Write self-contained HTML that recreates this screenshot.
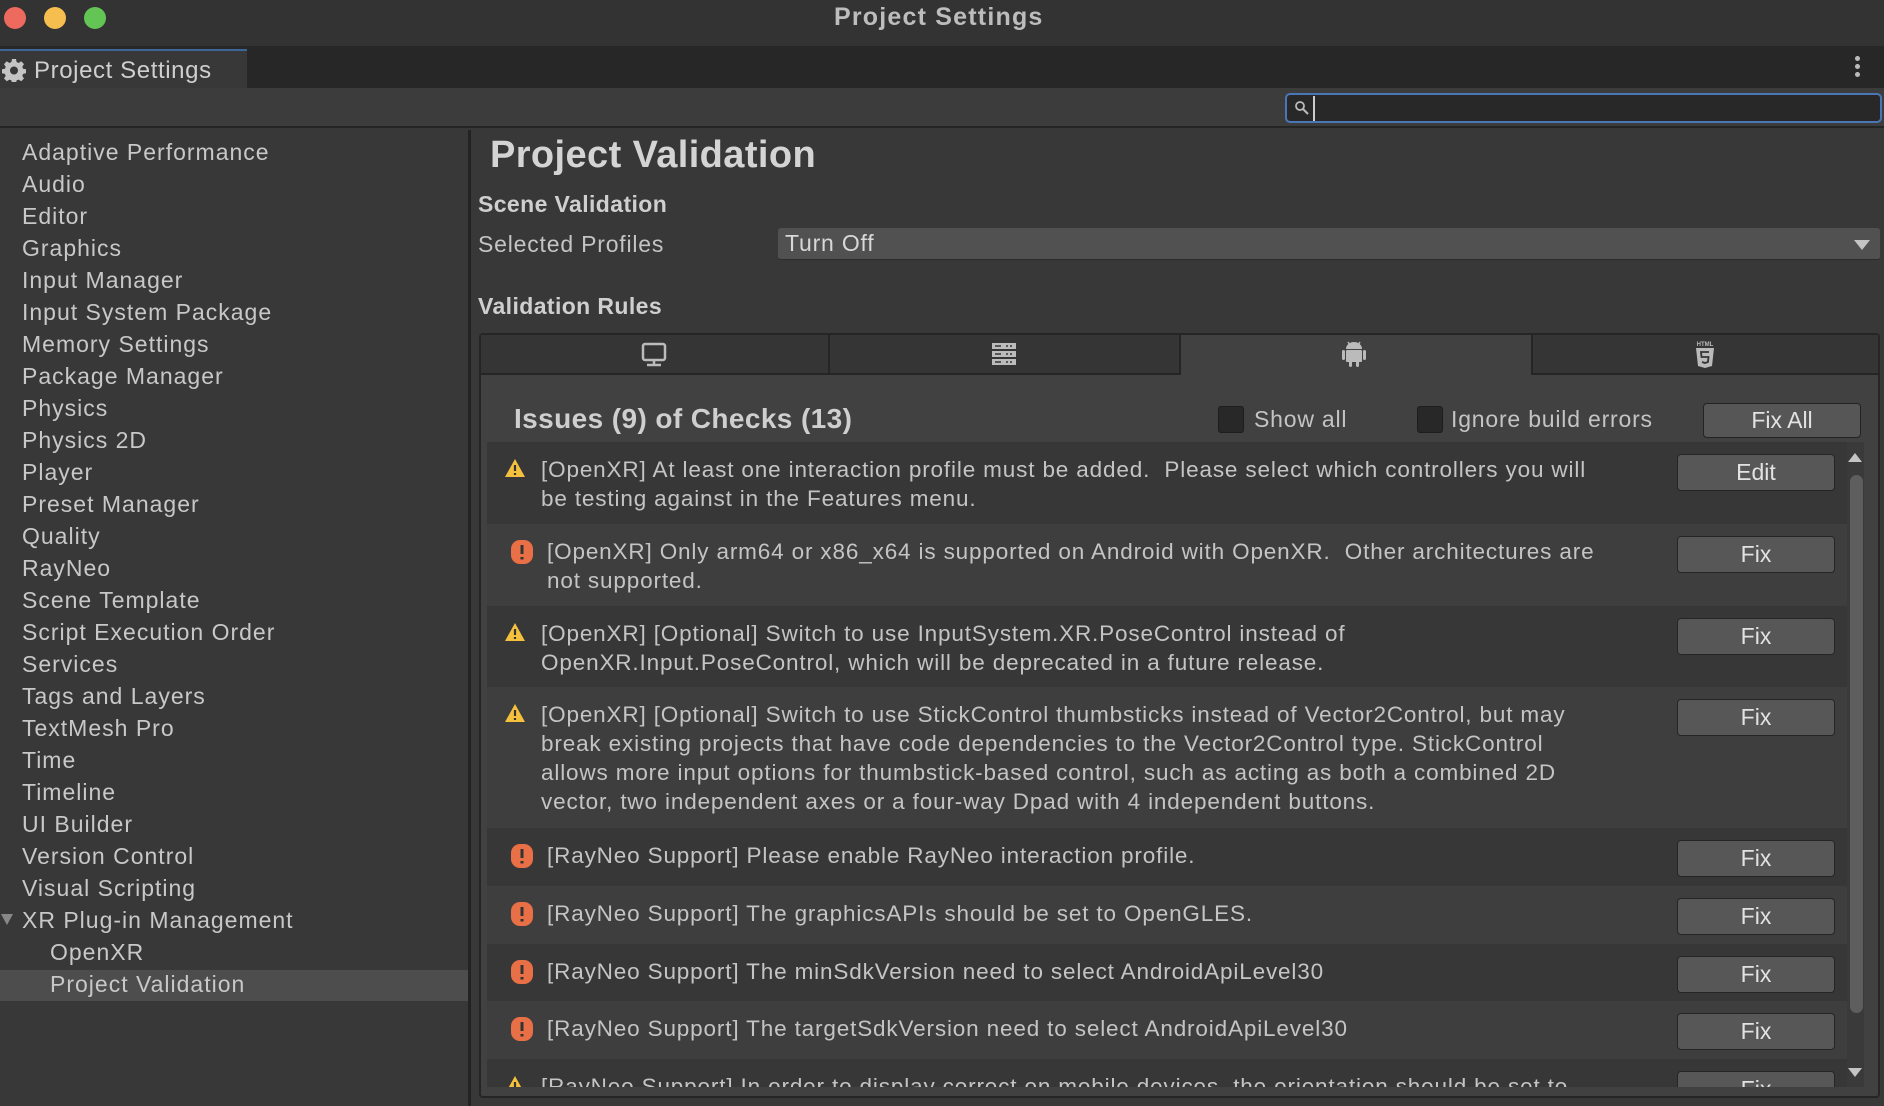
<!DOCTYPE html>
<html><head><meta charset="utf-8"><style>
*{margin:0;padding:0;box-sizing:border-box}
body{width:1884px;height:1106px;background:#383838;font-family:"Liberation Sans",sans-serif;color:#c8c8c8;position:relative;overflow:hidden}
.a{position:absolute}
.nav div{position:absolute;left:22px;font-size:23px;letter-spacing:1px;color:#c8c8c8;height:32px;line-height:32px;white-space:nowrap}
.row{position:absolute;left:487px;width:1360px}
.row .t{position:absolute;font-size:22.5px;letter-spacing:0.85px;line-height:29px;color:#c4c4c4;white-space:nowrap;top:13px}
.btn{position:absolute;left:1190px;top:12px;width:158px;height:37px;background:#575757;border:1px solid #252525;border-radius:4px;font-size:23px;color:#e2e2e2;text-align:center;line-height:35px}
.w{position:absolute;left:17px;top:16px}
.e{position:absolute;left:23px;top:15px}
</style></head><body>
<!-- title bar -->
<div class="a" style="left:0;top:0;width:1884px;height:46px;background:#333"></div>
<div class="a" style="left:4px;top:7px;width:22px;height:22px;border-radius:50%;background:#ee6a5f"></div>
<div class="a" style="left:44px;top:7px;width:22px;height:22px;border-radius:50%;background:#f5be4f"></div>
<div class="a" style="left:84px;top:7px;width:22px;height:22px;border-radius:50%;background:#62c554"></div>
<div class="a" style="left:834px;top:3px;font-size:25px;font-weight:bold;letter-spacing:1.2px;color:#bdbdbd">Project Settings</div>
<!-- tab bar -->
<div class="a" style="left:0;top:46px;width:1884px;height:42px;background:#272727"></div>
<div class="a" style="left:0;top:49px;width:247px;height:39px;background:#383838;border-top:2px solid #3d6699"></div>
<svg class="a" style="left:2px;top:58px" width="24" height="24" viewBox="0 0 24 24"><path fill="#c4c4c4" d="M10 1h4l.6 3 2 1 2.6-1.7 2.8 2.8L20.3 8.7l.8 2 2.9.6v4l-2.9.6-.8 2 1.7 2.6-2.8 2.8-2.6-1.7-2 .8-.6 2.9h-4l-.6-2.9-2-.8-2.6 1.7-2.8-2.8 1.7-2.6-.8-2L0 15.3v-4l2.9-.6.8-2L2 6.1 4.8 3.3l2.6 1.7 2-1zM12 8.5a4 4 0 100 8 4 4 0 000-8z"/></svg>
<div class="a" style="left:34px;top:57px;font-size:24px;letter-spacing:0.6px;color:#cfcfcf">Project Settings</div>
<div class="a" style="left:1855px;top:56px;width:5px;height:5px;border-radius:50%;background:#bbb;box-shadow:0 8px 0 #bbb,0 16px 0 #bbb"></div>
<!-- toolbar -->
<div class="a" style="left:0;top:88px;width:1884px;height:40px;background:#3c3c3c;border-bottom:2px solid #242424"></div>
<div class="a" style="left:1285px;top:93px;width:597px;height:30px;background:#282828;border:2px solid #4a76b8;border-radius:5px"></div>
<svg class="a" style="left:1294px;top:100px" width="16" height="16" viewBox="0 0 16 16"><circle cx="6" cy="6" r="4" fill="none" stroke="#bbb" stroke-width="1.8"/><path d="M9 9l5 5" stroke="#bbb" stroke-width="2"/></svg>
<div class="a" style="left:1313px;top:96px;width:2px;height:25px;background:#ccc"></div>
<!-- left nav -->
<div class="a" style="left:468px;top:130px;width:3px;height:976px;background:#232323"></div>
<div class="a" style="left:0;top:970px;width:468px;height:31px;background:#4d4d4d"></div>
<div class="nav">
<div style="top:136px">Adaptive Performance</div>
<div style="top:168px">Audio</div>
<div style="top:200px">Editor</div>
<div style="top:232px">Graphics</div>
<div style="top:264px">Input Manager</div>
<div style="top:296px">Input System Package</div>
<div style="top:328px">Memory Settings</div>
<div style="top:360px">Package Manager</div>
<div style="top:392px">Physics</div>
<div style="top:424px">Physics 2D</div>
<div style="top:456px">Player</div>
<div style="top:488px">Preset Manager</div>
<div style="top:520px">Quality</div>
<div style="top:552px">RayNeo</div>
<div style="top:584px">Scene Template</div>
<div style="top:616px">Script Execution Order</div>
<div style="top:648px">Services</div>
<div style="top:680px">Tags and Layers</div>
<div style="top:712px">TextMesh Pro</div>
<div style="top:744px">Time</div>
<div style="top:776px">Timeline</div>
<div style="top:808px">UI Builder</div>
<div style="top:840px">Version Control</div>
<div style="top:872px">Visual Scripting</div>
<div style="top:904px">XR Plug-in Management</div>
<div style="top:936px;left:50px">OpenXR</div>
<div style="top:968px;left:50px">Project Validation</div>
</div>
<div class="a" style="left:1px;top:914px;width:0;height:0;border-left:6px solid transparent;border-right:6px solid transparent;border-top:11px solid #888"></div>
<!-- right -->
<div class="a" style="left:490px;top:134px;font-size:38px;font-weight:bold;letter-spacing:0.4px;color:#d4d4d4">Project Validation</div>
<div class="a" style="left:478px;top:191px;font-size:23px;font-weight:bold;letter-spacing:0.4px;color:#cfcfcf">Scene Validation</div>
<div class="a" style="left:478px;top:231px;font-size:23px;letter-spacing:0.8px;color:#c4c4c4">Selected Profiles</div>
<div class="a" style="left:778px;top:228px;width:1102px;height:32px;background:#515151;border-radius:3px;border-bottom:1px solid #2c2c2c"></div>
<div class="a" style="left:785px;top:230px;font-size:23px;letter-spacing:0.8px;color:#d8d8d8">Turn Off</div>
<div class="a" style="left:1854px;top:240px;width:0;height:0;border-left:8px solid transparent;border-right:8px solid transparent;border-top:10px solid #c4c4c4"></div>
<div class="a" style="left:478px;top:293px;font-size:23px;font-weight:bold;letter-spacing:0.4px;color:#cfcfcf">Validation Rules</div>
<!-- tab box -->
<div class="a" style="left:479px;top:333px;width:1401px;height:765px;background:#414141;border:2px solid #252525;border-radius:4px"></div>
<div class="a" style="left:481px;top:335px;width:349px;height:40px;background:#353535;border-bottom:2px solid #252525;border-right:2px solid #252525"></div>
<div class="a" style="left:830px;top:335px;width:351px;height:40px;background:#353535;border-bottom:2px solid #252525;border-right:2px solid #252525"></div>
<div class="a" style="left:1531px;top:335px;width:347px;height:40px;background:#353535;border-bottom:2px solid #252525;border-left:2px solid #252525"></div>
<svg class="a" style="left:641px;top:342px" width="26" height="26" viewBox="0 0 26 26"><rect x="2" y="2" width="22" height="16" rx="2" fill="none" stroke="#bbb" stroke-width="2.5"/><path d="M13 18v4M6 23h14" stroke="#bbb" stroke-width="2.5"/></svg>
<svg class="a" style="left:991px;top:341px" width="26" height="26" viewBox="0 0 26 26"><rect x="1" y="2" width="24" height="6" fill="#bbb"/><rect x="1" y="10" width="24" height="6" fill="#bbb"/><rect x="1" y="18" width="24" height="6" fill="#bbb"/><path d="M4 5h6M4 13h6M4 21h6M15 5h2M19 5h2M15 13h2M19 13h2M15 21h2M19 21h2" stroke="#353535" stroke-width="1.5"/></svg>
<svg class="a" style="left:1341px;top:340px" width="26" height="30" viewBox="0 0 26 30"><path d="M5 9a8 7 0 0116 0z" fill="#bbb"/><path d="M7 2l2 3M19 2l-2 3" stroke="#bbb" stroke-width="1.5"/><rect x="5" y="10" width="16" height="12" rx="1" fill="#bbb"/><rect x="1" y="10" width="3" height="10" rx="1.5" fill="#bbb"/><rect x="22" y="10" width="3" height="10" rx="1.5" fill="#bbb"/><rect x="8" y="20" width="3" height="7" rx="1.5" fill="#bbb"/><rect x="15" y="20" width="3" height="7" rx="1.5" fill="#bbb"/></svg>
<svg class="a" style="left:1694px;top:340px" width="22" height="30" viewBox="0 0 22 30"><text x="11" y="6" font-size="6" font-family="Liberation Sans" font-weight="bold" fill="#bbb" text-anchor="middle">HTML</text><path d="M2 8h18l-2 18-7 2-7-2z" fill="#bbb"/><path d="M15 12H7l.5 5h7l-.5 5-3 1-3-1" fill="none" stroke="#353535" stroke-width="1.8"/></svg>
<div class="a" style="left:514px;top:403px;font-size:28px;font-weight:bold;letter-spacing:0.4px;color:#cfcfcf">Issues (9) of Checks (13)</div>
<div class="a" style="left:1218px;top:406px;width:26px;height:27px;background:#282828;border:1px solid #1d1d1d;border-radius:3px"></div>
<div class="a" style="left:1254px;top:406px;font-size:23px;letter-spacing:0.8px;color:#c4c4c4">Show all</div>
<div class="a" style="left:1417px;top:406px;width:26px;height:27px;background:#282828;border:1px solid #1d1d1d;border-radius:3px"></div>
<div class="a" style="left:1451px;top:406px;font-size:23px;letter-spacing:0.8px;color:#c4c4c4">Ignore build errors</div>
<div class="a" style="left:1703px;top:403px;width:158px;height:35px;background:#565656;border:1px solid #232323;border-radius:4px;text-align:center;line-height:33px;font-size:23px;color:#e2e2e2">Fix All</div>
<!-- list -->
<div class="a" style="left:487px;top:442px;width:1360px;height:645px;overflow:hidden">
<div class="row" style="left:0;top:0;height:82px;background:#373737"><svg class="w" width="22" height="20" viewBox="0 0 22 20"><path d="M11 1L21 19H1z" fill="#f4c03e"/><path d="M11 7v6M11 15v2" stroke="#333" stroke-width="2.2"/></svg><div class="t" style="left:54px">[OpenXR] At least one interaction profile must be added.&nbsp; Please select which controllers you will<br>be testing against in the Features menu.</div><div class="btn">Edit</div></div>
<div class="row" style="left:0;top:82px;height:82px;background:#3e3e3e"><svg class="e" width="24" height="26" viewBox="0 0 24 26"><rect x="1" y="1" width="22" height="24" rx="9" fill="#e96f47"/><path d="M12 6v9M12 18v2.5" stroke="#333" stroke-width="3"/></svg><div class="t" style="left:60px">[OpenXR] Only arm64 or x86_x64 is supported on Android with OpenXR.&nbsp; Other architectures are<br>not supported.</div><div class="btn">Fix</div></div>
<div class="row" style="left:0;top:164px;height:81px;background:#373737"><svg class="w" width="22" height="20" viewBox="0 0 22 20"><path d="M11 1L21 19H1z" fill="#f4c03e"/><path d="M11 7v6M11 15v2" stroke="#333" stroke-width="2.2"/></svg><div class="t" style="left:54px">[OpenXR] [Optional] Switch to use InputSystem.XR.PoseControl instead of<br>OpenXR.Input.PoseControl, which will be deprecated in a future release.</div><div class="btn">Fix</div></div>
<div class="row" style="left:0;top:245px;height:141px;background:#3e3e3e"><svg class="w" width="22" height="20" viewBox="0 0 22 20"><path d="M11 1L21 19H1z" fill="#f4c03e"/><path d="M11 7v6M11 15v2" stroke="#333" stroke-width="2.2"/></svg><div class="t" style="left:54px">[OpenXR] [Optional] Switch to use StickControl thumbsticks instead of Vector2Control, but may<br>break existing projects that have code dependencies to the Vector2Control type. StickControl<br>allows more input options for thumbstick-based control, such as acting as both a combined 2D<br>vector, two independent axes or a four-way Dpad with 4 independent buttons.</div><div class="btn">Fix</div></div>
<div class="row" style="left:0;top:386px;height:58px;background:#373737"><svg class="e" width="24" height="26" viewBox="0 0 24 26"><rect x="1" y="1" width="22" height="24" rx="9" fill="#e96f47"/><path d="M12 6v9M12 18v2.5" stroke="#333" stroke-width="3"/></svg><div class="t" style="left:60px">[RayNeo Support] Please enable RayNeo interaction profile.</div><div class="btn">Fix</div></div>
<div class="row" style="left:0;top:444px;height:58px;background:#3e3e3e"><svg class="e" width="24" height="26" viewBox="0 0 24 26"><rect x="1" y="1" width="22" height="24" rx="9" fill="#e96f47"/><path d="M12 6v9M12 18v2.5" stroke="#333" stroke-width="3"/></svg><div class="t" style="left:60px">[RayNeo Support] The graphicsAPIs should be set to OpenGLES.</div><div class="btn">Fix</div></div>
<div class="row" style="left:0;top:502px;height:57px;background:#373737"><svg class="e" width="24" height="26" viewBox="0 0 24 26"><rect x="1" y="1" width="22" height="24" rx="9" fill="#e96f47"/><path d="M12 6v9M12 18v2.5" stroke="#333" stroke-width="3"/></svg><div class="t" style="left:60px">[RayNeo Support] The minSdkVersion need to select AndroidApiLevel30</div><div class="btn">Fix</div></div>
<div class="row" style="left:0;top:559px;height:58px;background:#3e3e3e"><svg class="e" width="24" height="26" viewBox="0 0 24 26"><rect x="1" y="1" width="22" height="24" rx="9" fill="#e96f47"/><path d="M12 6v9M12 18v2.5" stroke="#333" stroke-width="3"/></svg><div class="t" style="left:60px">[RayNeo Support] The targetSdkVersion need to select AndroidApiLevel30</div><div class="btn">Fix</div></div>
<div class="row" style="left:0;top:617px;height:60px;background:#373737"><svg class="w" width="22" height="20" viewBox="0 0 22 20"><path d="M11 1L21 19H1z" fill="#f4c03e"/><path d="M11 7v6M11 15v2" stroke="#333" stroke-width="2.2"/></svg><div class="t" style="left:54px">[RayNeo Support] In order to display correct on mobile devices, the orientation should be set to</div><div class="btn">Fix</div></div>
</div>
<!-- scrollbar -->
<div class="a" style="left:1847px;top:442px;width:17px;height:645px;background:#3a3a3a"></div>
<div class="a" style="left:1848px;top:453px;width:0;height:0;border-left:7px solid transparent;border-right:7px solid transparent;border-bottom:9px solid #c4c4c4"></div>
<div class="a" style="left:1850px;top:475px;width:13px;height:538px;background:#5e5e5e;border-radius:7px"></div>
<div class="a" style="left:1848px;top:1068px;width:0;height:0;border-left:7px solid transparent;border-right:7px solid transparent;border-top:9px solid #c4c4c4"></div>
</body></html>
